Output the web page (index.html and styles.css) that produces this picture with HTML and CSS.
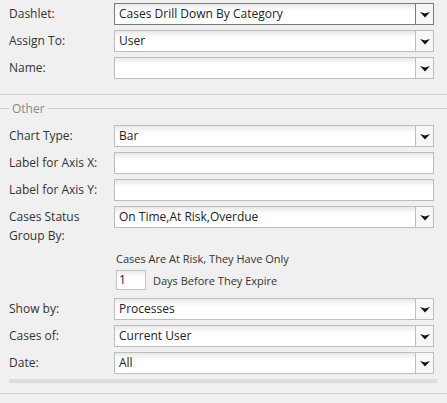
FILE: index.html
```html
<!DOCTYPE html>
<html>
<head>
<meta charset="utf-8">
<link rel="stylesheet" href="styles.css">
</head>
<body>
<div class="page">
  <div class="rows top">
    <div class="row"><span class="label">Dashlet:</span><div class="select dark"><span class="val">Cases Drill Down By Category</span><span class="btn"><svg width="10" height="6" viewBox="0 0 10 6"><path d="M0 0 L5 1.6 L10 0 L5 5.6 Z" fill="#111"/></svg></span></div></div>
    <div class="row"><span class="label">Assign To:</span><div class="select"><span class="val">User</span><span class="btn"><svg width="10" height="6" viewBox="0 0 10 6"><path d="M0 0 L5 1.6 L10 0 L5 5.6 Z" fill="#111"/></svg></span></div></div>
    <div class="row"><span class="label">Name:</span><div class="select"><span class="val"></span><span class="btn"><svg width="10" height="6" viewBox="0 0 10 6"><path d="M0 0 L5 1.6 L10 0 L5 5.6 Z" fill="#111"/></svg></span></div></div>
  </div>
  <div class="divider"></div>
  <div class="legend"><span class="lline short"></span><span class="ltext">Other</span><span class="lline"></span></div>
  <div class="rows other">
    <div class="row"><span class="label">Chart Type:</span><div class="select"><span class="val">Bar</span><span class="btn"><svg width="10" height="6" viewBox="0 0 10 6"><path d="M0 0 L5 1.6 L10 0 L5 5.6 Z" fill="#111"/></svg></span></div></div>
    <div class="row"><span class="label">Label for Axis X:</span><div class="input"></div></div>
    <div class="row"><span class="label">Label for Axis Y:</span><div class="input"></div></div>
    <div class="row tall"><span class="label two">Cases Status<br>Group By:</span><div class="select"><span class="val">On Time,At Risk,Overdue</span><span class="btn"><svg width="10" height="6" viewBox="0 0 10 6"><path d="M0 0 L5 1.6 L10 0 L5 5.6 Z" fill="#111"/></svg></span></div></div>
  </div>
  <div class="risk">
    <div class="risk-line">Cases Are At Risk, They Have Only</div>
    <div class="risk-days"><div class="small-input">1</div><span>Days Before They Expire</span></div>
  </div>
  <div class="rows bottom">
    <div class="row"><span class="label">Show by:</span><div class="select"><span class="val">Processes</span><span class="btn"><svg width="10" height="6" viewBox="0 0 10 6"><path d="M0 0 L5 1.6 L10 0 L5 5.6 Z" fill="#111"/></svg></span></div></div>
    <div class="row"><span class="label">Cases of:</span><div class="select"><span class="val">Current User</span><span class="btn"><svg width="10" height="6" viewBox="0 0 10 6"><path d="M0 0 L5 1.6 L10 0 L5 5.6 Z" fill="#111"/></svg></span></div></div>
    <div class="row"><span class="label">Date:</span><div class="select"><span class="val">All</span><span class="btn"><svg width="10" height="6" viewBox="0 0 10 6"><path d="M0 0 L5 1.6 L10 0 L5 5.6 Z" fill="#111"/></svg></span></div></div>
  </div>
  <div class="bar"></div>
  <div class="divider last"></div>
</div>
</body>
</html>
```
FILE: styles.css
```css
html, body {
  margin: 0;
  padding: 0;
  background: #f0f0f0;
}
body {
  font-family: "Open Sans", "Liberation Sans", sans-serif;
  font-size: 12px;
  color: #333;
}
.page {
  width: 447px;
  padding-top: 3px;
}
.rows {
  display: flex;
  flex-direction: column;
  gap: 5px;
  padding-left: 9px;
}
.row {
  display: flex;
  align-items: flex-start;
}
.label {
  width: 105px;
  height: 22px;
  line-height: 22px;
  flex: none;
}
.label.two {
  height: auto;
  line-height: 19px;
  padding-top: 1px;
}
.select, .input {
  box-sizing: border-box;
  width: 320px;
  height: 22px;
  border: 1px solid #bdbdbd;
  background: linear-gradient(#e9e9e9 0, #ffffff 7px, #ffffff 100%);
  display: flex;
  align-items: stretch;
}
.select.dark {
  border-color: #7a7a7a;
}
.val {
  flex: 1;
  padding-left: 4px;
  line-height: 20px;
  font-size: 12px;
  color: #222;
  white-space: nowrap;
  overflow: hidden;
}
.btn {
  width: 17px;
  border-left: 1px solid #bdbdbd;
  background: #f7f7f7;
  display: flex;
  align-items: center;
  justify-content: center;
}
.select.dark .btn {
  border-left-color: #7a7a7a;
}
.btn svg {
  display: block;
  margin-top: 1px;
}
.divider {
  height: 1px;
  background: #cfcfcf;
  margin-top: 15px;
}
.legend {
  display: flex;
  align-items: center;
  height: 26px;
}
.lline {
  flex: 1;
  height: 1px;
  background: #cfcfcf;
}
.lline.short {
  flex: none;
  width: 9px;
}
.ltext {
  padding: 0 3px;
  color: #888;
  font-size: 12px;
}
.other {
  margin-top: 4px;
}
.risk {
  padding-left: 116px;
  margin-top: 6px;
  font-size: 11px;
  color: #333;
}
.risk-line {
  line-height: 16px;
}
.risk-days {
  display: flex;
  align-items: center;
  gap: 7px;
  margin-top: 3px;
}
.small-input {
  box-sizing: border-box;
  width: 30px;
  height: 20px;
  border: 1px solid #c4c4c4;
  background: linear-gradient(#ececec 0, #ffffff 6px);
  padding-left: 2px;
  line-height: 18px;
  font-size: 12px;
  color: #222;
}
.bottom {
  margin-top: 8px;
}
.bar {
  margin: 5px 10px 0 9px;
  height: 4px;
  background: #dcdcdc;
}
.divider.last {
  margin-top: 10px;
}
```
